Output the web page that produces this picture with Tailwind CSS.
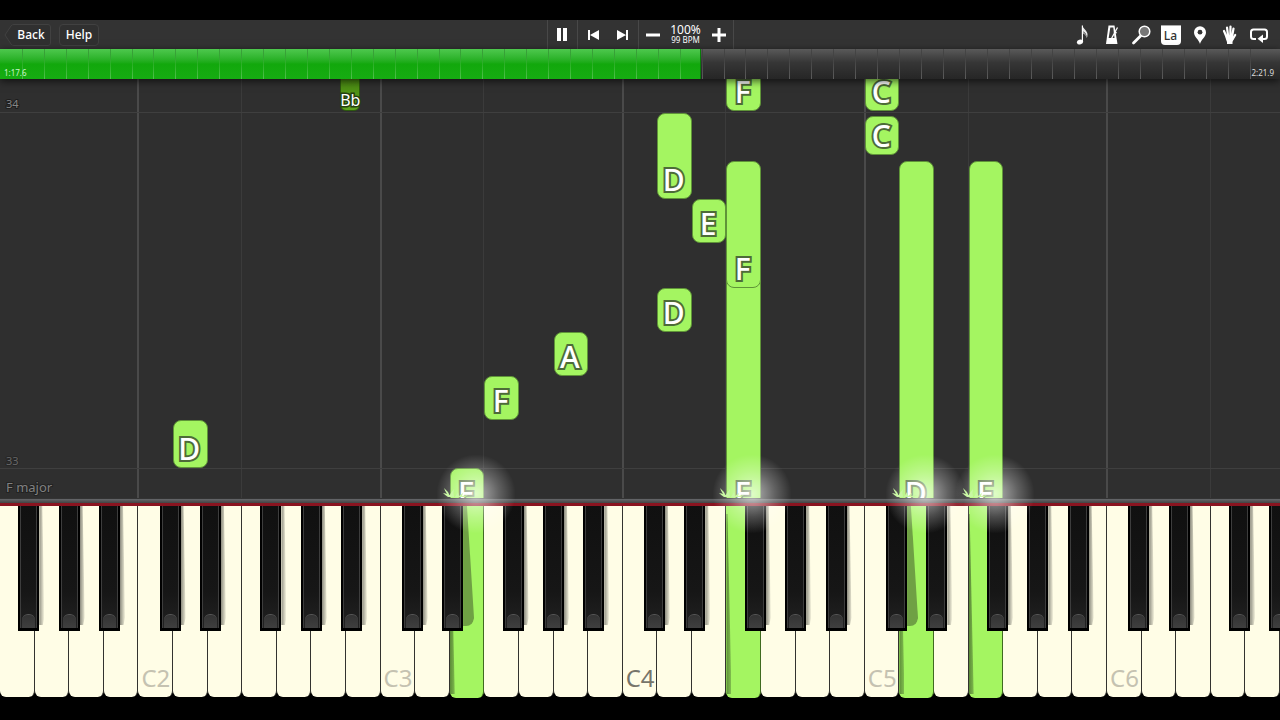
<!DOCTYPE html>
<html lang="en">
  <head>
    <meta charset="UTF-8" />
    <meta name="viewport" content="width=device-width, initial-scale=1.0" />
    <script src="https://cdn.jsdelivr.net/npm/@tailwindcss/browser@4"></script>
    <title>Piano practice</title>
  </head>
  <body class="bg-black">
    <div class="flex min-h-screen flex-col overflow-hidden bg-black pt-5 pb-[23px] font-['Noto_Sans','Open_Sans',sans-serif] text-white select-none">
      <!-- toolbar -->
      <header class="grid h-[29px] grid-cols-[1fr_auto_1fr] items-center bg-[#333333]">
        <div class="flex items-center gap-2 pl-1 text-xs font-medium">
          <button class="relative h-[22px] w-[47px] pl-[7px]">
            <svg class="absolute inset-0" width="47" height="22" viewBox="0 0 47 22" fill="#303030" stroke="#414141">
              <path d="M1 11 L7 2 Q8 .5 10 .5 H44 Q46.500 .5 46.500 3 V19 Q46.500 21.500 44 21.500 H10 Q8 21.500 7 20 Z" />
            </svg>
            <span class="relative">Back</span>
          </button>
          <button class="h-[22px] w-10 rounded-sm border border-[#414141] bg-[#303030]">Help</button>
        </div>

        <div class="flex h-full items-center">
          <button aria-label="Pause" class="flex h-full w-[31px] items-center justify-center border-x border-[#484848]">
            <svg width="12" height="14" viewBox="0 0 12 14" fill="#fff"><path d="M1 0h4v13H1zM7 0h4v13H7z" /></svg>
          </button>
          <button aria-label="Previous" class="flex h-full w-[30px] items-center justify-center">
            <svg width="12" height="12" viewBox="0 0 12 12" fill="#fff"><path d="M1 1h2v10H1zM12 1v10L3 6z" /></svg>
          </button>
          <button aria-label="Next" class="flex h-full w-[30px] items-center justify-center">
            <svg width="12" height="12" viewBox="0 0 12 12" fill="#fff"><path d="M9 1h2v10H9zM0 1v10l9-5z" /></svg>
          </button>
          <div class="flex h-full items-center border-x border-[#484848]">
            <button aria-label="Slower" class="flex h-full w-[28px] items-center justify-center">
              <svg width="14" height="14" viewBox="0 0 14 14" fill="#fff"><path d="M0 5.500h14v3H0z" /></svg>
            </button>
            <div class="w-[38px] text-center">
              <p class="-mt-px text-xs leading-3">100%</p>
              <p class="text-[8px] leading-2">99 BPM</p>
            </div>
            <button aria-label="Faster" class="flex h-full w-[28px] items-center justify-center">
              <svg width="14" height="14" viewBox="0 0 14 14" fill="#fff"><path d="M0 5.500h5.500V0h3v5.500H14v3H8.500V14h-3V8.500H0z" /></svg>
            </button>
          </div>
        </div>

        <div class="mr-[11px] flex w-[197px] justify-between justify-self-end">
          <button aria-label="Notation" class="size-5">
            <svg viewBox="0 0 20 20" fill="#fff">
              <ellipse cx="8" cy="17" rx="3.200" ry="2.400" transform="rotate(-20 8 17)" />
              <path d="M9.800 .5h1.200V17H9.800z" />
              <path d="M10.500 .5C11 4 15.500 5.500 15.500 9.500q0 2-.8 3.500Q15 8 10.500 6z" opacity=".9" />
              <path d="M10.500 5C11.500 8 15 9 14.500 13q-.7-4-4-4.500z" opacity=".6" />
            </svg>
          </button>
          <button aria-label="Metronome" class="size-5">
            <svg viewBox="0 0 20 20">
              <path d="M6.500 .5h6l3 18.500H4z" fill="#fff" />
              <path d="M8.300 2.500h3L12.500 13H6.700z" fill="#3a3a3a" />
              <path d="M9.500 13.500 15.500 2.500" stroke="#fff" stroke-width="1.300" />
              <path d="M12 6.500l2.500 1.500" stroke="#fff" stroke-width="1.500" />
            </svg>
          </button>
          <button aria-label="Zoom" class="size-5">
            <svg viewBox="0 0 20 20" stroke="#fff">
              <path d="M9.500 11 2.500 18" stroke-width="2.800" stroke-linecap="round" />
              <circle cx="13.500" cy="6.500" r="5.300" fill="#777" stroke-width="1.500" />
            </svg>
          </button>
          <button aria-label="Note names" class="flex size-5 items-end justify-center rounded-b-sm border-t border-[#aaaaaa] bg-white text-xs leading-[18px] font-medium text-[#333]">La</button>
          <button aria-label="Bookmark" class="size-5">
            <svg viewBox="0 0 20 20">
              <path d="M10 19C9 14.500 4 12 4 7.200a6 6 0 0 1 12 0C16 12 11 14.500 10 19z" fill="#fff" />
              <circle cx="10" cy="7.200" r="2.400" fill="#333" />
            </svg>
          </button>
          <button aria-label="Hands" class="size-5">
            <svg viewBox="0 0 20 20" fill="none" stroke="#fff" stroke-linecap="round">
              <path d="M4 6 7 13M7 2.500l1.200 9M10.500 1.500 10.300 11M13.500 3.500 12 12" stroke-width="2.200" />
              <path d="M15.200 10 12.500 14.500" stroke-width="2.200" />
              <path d="M5.500 10.500h7.500l1 2-1.500 4.500v2H7v-2Q5.500 14.500 5.500 10.500z" fill="#fff" stroke="none" />
            </svg>
          </button>
          <button aria-label="Loop" class="size-5">
            <svg viewBox="0 0 20 20" fill="none" stroke="#fff" stroke-width="2">
              <path d="M7 14H4.500Q2 14 2 11.500V7Q2 4.500 4.500 4.500h11Q18 4.500 18 7v4.500Q18 14 15.500 14H13" />
              <path d="M14 9.500V18l-5.500-4.200z" fill="#fff" stroke="none" />
            </svg>
          </button>
        </div>
      </header>

      <!-- song position -->
      <div id="progress" class="relative z-10 h-[30px] bg-linear-to-b from-[#5a5a5a] via-[#363636] via-45% to-[#262626] shadow-[0_2px_8px_#000000aa]">
        <div class="h-full border-r border-[#0a7a0a] bg-linear-to-b from-[#4dc84d] via-[#12a80c] via-50% to-[#16ac12]" style="width: 54.8%"></div>
        <div id="ticks" class="absolute inset-0 overflow-hidden"></div>
        <span class="absolute bottom-px left-1 text-[8px] leading-[10px] text-[#c9f5c9]">1:17.6</span>
        <span class="absolute right-[6px] bottom-px text-[8px] leading-[10px] text-[#dddddd]">2:21.9</span>
      </div>

      <!-- falling notes -->
      <main id="roll" class="relative min-h-[419px] flex-1 overflow-hidden bg-[#2f2f2f]">
        <div id="lines"></div>
        <div class="absolute inset-x-0 bottom-[385px] h-px bg-[#3f3f3f]"></div>
        <div class="absolute inset-x-0 bottom-[29px] h-px bg-[#3f3f3f]"></div>
        <span class="absolute bottom-[386px] left-[6px] text-[11px] leading-4 text-[#858585] [paint-order:stroke] [-webkit-text-stroke:2px_#1d1d1d]">34</span>
        <span class="absolute bottom-[29px] left-[6px] text-[11px] leading-4 text-[#666666] [paint-order:stroke] [-webkit-text-stroke:2px_#262626]">33</span>
        <span class="absolute bottom-[3px] left-[6px] text-[13px] leading-4 text-[#808080] [paint-order:stroke] [-webkit-text-stroke:2px_#222222]">F major</span>
      </main>

      <!-- keyboard -->
      <div class="h-[8px] border-t border-b-3 border-t-[#333333] border-b-[#8a1420] bg-linear-to-b from-[#66686b] to-[#434343]"></div>
      <div class="relative">
        <div id="white" class="grid h-[191px] grid-cols-[repeat(37,minmax(0,1fr))]"></div>
        <div id="black" class="absolute inset-x-0 top-0 h-[125px] overflow-x-clip"></div>
        <div id="glow" class="pointer-events-none absolute inset-x-0 top-0"></div>
      </div>
    </div>

    <script>
      const WHITES = 37;
      const whiteW = 100 / WHITES;
      const semiW = (whiteW * 7) / 12;
      const firstC = -3 * whiteW; // keyboard starts on F1
      const pressed = [13, 21, 26, 28];

      // key = white key index, bottom = distance from the strike line
      const notes = [
        { key: 5, name: "D", bottom: 30, height: 48 },
        { key: 13, name: "F", bottom: -14, height: 44 },
        { key: 14, name: "F", bottom: 78, height: 44 },
        { key: 16, name: "A", bottom: 122, height: 44 },
        { key: 19, name: "D", bottom: 166, height: 44 },
        { key: 19, name: "D", bottom: 299, height: 86 },
        { key: 20, name: "E", bottom: 255, height: 44 },
        { key: 21, name: "F", bottom: -14, height: 240 },
        { key: 21, name: "F", bottom: 210, height: 127 },
        { key: 21, name: "F", bottom: 387, height: 60 },
        { key: 25, name: "C", bottom: 343, height: 39 },
        { key: 25, name: "C", bottom: 387, height: 60 },
        { key: 26, name: "D", bottom: -14, height: 351 },
        { key: 28, name: "F", bottom: -14, height: 351 },
      ];

      const add = (id, html) =>
        document.getElementById(id).insertAdjacentHTML("beforeend", html);

      for (let i = 1; i < 58; i++) {
        add("ticks", `<div class="absolute inset-y-0 w-px bg-linear-to-b from-black/20 via-white/10 to-white/25" style="left:${i * 1.713}%"></div>`);
      }

      for (let i = 4; i < WHITES; i += 7) {
        add("lines", `<div class="absolute inset-y-0 w-[2px] -translate-x-px bg-[#4a4a4a]" style="left:${i * whiteW}%"></div>`);
        add("lines", `<div class="absolute inset-y-0 w-px -translate-x-px bg-[#3b3b3b]" style="left:${(i + 3) * whiteW}%"></div>`);
      }

      notes.forEach((n) => {
        add("roll", `<div class="absolute flex items-end justify-center rounded-lg border border-[#5f9438] bg-[#a4f561]" style="left:${n.key * whiteW}%;width:${whiteW}%;bottom:${n.bottom}px;height:${n.height}px">
          <span class="-translate-x-px text-3xl leading-9 font-medium [paint-order:stroke] [-webkit-text-stroke:4px_#4d6b38]">${n.name}</span></div>`);
      });
      add("roll", `<div class="absolute flex items-end justify-center rounded-b-md border border-[#2d5a0e] bg-linear-to-b from-[#346d08] to-[#5da41c]" style="left:${firstC + 22 * semiW}%;width:${semiW}%;bottom:387px;height:60px">
          <span class="text-base leading-5 [paint-order:stroke] [-webkit-text-stroke:3px_#24400f]">Bb</span></div>`);

      for (let i = 0; i < WHITES; i++) {
        const down = pressed.includes(i);
        const isC = (i + 3) % 7 === 0;
        const octave = (i + 3) / 7 + 1;
        const color = octave === 4 ? "text-[#77756a]" : "text-[#c5c2b1]";
        add("white", `<button aria-label="Key ${i + 1}" class="relative rounded-b-md border-r ${down ? "-mb-px border-[#3f6a20] bg-[#a4f561]" : "border-[#33332f] bg-[#fffde6]"}">
          ${isC ? `<span class="absolute bottom-px left-[3px] text-2xl leading-9 ${color}">C${octave}</span>` : ""}
          ${down ? `<span class="absolute bottom-1 left-0 h-[180px] w-[5px] bg-linear-to-r from-[#5c8a38] to-[#7fbd4d] [clip-path:polygon(0_0,20%_0,100%_100%,0_100%)]"></span>` : ""}
        </button>`);
      }

      const blackSteps = [1, 3, 6, 8, 10];
      for (let oct = 0; oct < 6; oct++) {
        blackSteps.forEach((s) => {
          const left = firstC + (oct * 12 + s) * semiW;
          if (left < 0 || left > 100) return;
          // white key the shadow falls on
          const next = oct * 7 - 3 + { 1: 1, 3: 2, 6: 4, 8: 5, 10: 6 }[s];
          const wide = next === 13 || next === 26;
          add("black", `<div class="absolute inset-y-0 ml-px min-w-[21px]" style="left:${left}%;width:${semiW}%">
            ${wide
              ? `<span class="absolute top-0 left-full h-[120px] w-[11px] rounded-br-lg bg-[#6fa044] [clip-path:polygon(0_0,35%_0,100%_94%,80%_100%,0_100%)]"></span>`
              : `<span class="absolute top-0 left-full h-[119px] w-[5px] bg-linear-to-r from-black/45 to-black/5 [clip-path:polygon(0_0,60%_0,100%_94%,70%_100%,0_100%)]"></span>`}
            <button aria-label="Black key ${oct + 1}-${s}" class="absolute inset-0 border-x-2 border-b-3 border-black bg-[#111111]">
              <span class="absolute inset-0 border-x border-[#3d3d3d] bg-linear-to-b from-[#101010] via-[#161616] via-70% to-[#222222]"></span>
              <span class="absolute inset-x-[2px] bottom-0 h-[14px] rounded-t-md border-t border-[#555555] bg-linear-to-b from-[#333333] to-[#3f3f3f]"></span>
            </button></div>`);
        });
      }

      pressed.forEach((k) => {
        add("glow", `<div class="absolute -top-[52px] -ml-10 size-20 bg-radial from-white/65 from-0% via-white/25 via-40% to-transparent to-70%" style="left:${(k + 0.75) * whiteW}%"></div>
          <svg class="absolute -top-[22px] -ml-[8px]" style="left:${k * whiteW}%" width="30" height="14" viewBox="0 0 30 14" fill="#c9f7a4">
            <path d="M2 4q4 3 6 8l6 1H6Q3 11 1 9q3 .5 4 1Q3 7 2 4zM7 13q2-5 5-8-1 4 0 8zM13 13l3-5 1 4 4-3-1 3 6-1-3 2z" /></svg>`);
      });
    </script>
  </body>
</html>
